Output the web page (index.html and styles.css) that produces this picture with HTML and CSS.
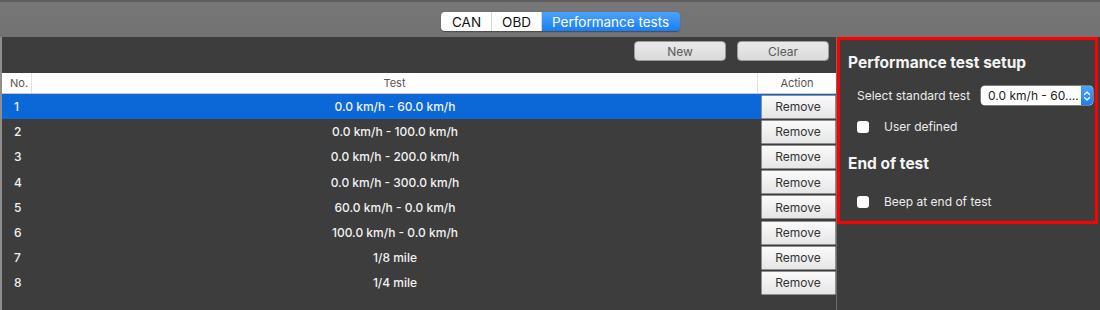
FILE: index.html
```html
<!DOCTYPE html>
<html lang="en">
<head>
    <meta charset="UTF-8">
    <title>Performance tests</title>
    <link rel="stylesheet" href="styles.css">
</head>
<body>
    <div class="topbar">
        <div class="segmented">
            <span class="seg">CAN</span>
            <span class="seg">OBD</span>
            <span class="seg active">Performance tests</span>
        </div>
    </div>
    <div class="main">
        <div class="list-panel">
            <div class="toolbar">
                <button class="btn wide">New</button>
                <button class="btn wide">Clear</button>
            </div>
            <div class="table">
                <div class="thead">
                    <div class="col-no">No.</div>
                    <div class="col-test">Test</div>
                    <div class="col-action">Action</div>
                </div>
                <div class="row selected">
                    <div class="col-no">1</div>
                    <div class="col-test">0.0 km/h - 60.0 km/h</div>
                    <div class="col-action"><button class="btn remove">Remove</button></div>
                </div>
                <div class="row">
                    <div class="col-no">2</div>
                    <div class="col-test">0.0 km/h - 100.0 km/h</div>
                    <div class="col-action"><button class="btn remove">Remove</button></div>
                </div>
                <div class="row">
                    <div class="col-no">3</div>
                    <div class="col-test">0.0 km/h - 200.0 km/h</div>
                    <div class="col-action"><button class="btn remove">Remove</button></div>
                </div>
                <div class="row">
                    <div class="col-no">4</div>
                    <div class="col-test">0.0 km/h - 300.0 km/h</div>
                    <div class="col-action"><button class="btn remove">Remove</button></div>
                </div>
                <div class="row">
                    <div class="col-no">5</div>
                    <div class="col-test">60.0 km/h - 0.0 km/h</div>
                    <div class="col-action"><button class="btn remove">Remove</button></div>
                </div>
                <div class="row">
                    <div class="col-no">6</div>
                    <div class="col-test">100.0 km/h - 0.0 km/h</div>
                    <div class="col-action"><button class="btn remove">Remove</button></div>
                </div>
                <div class="row">
                    <div class="col-no">7</div>
                    <div class="col-test">1/8 mile</div>
                    <div class="col-action"><button class="btn remove">Remove</button></div>
                </div>
                <div class="row">
                    <div class="col-no">8</div>
                    <div class="col-test">1/4 mile</div>
                    <div class="col-action"><button class="btn remove">Remove</button></div>
                </div>
            </div>
        </div>
        <div class="side-panel">
            <div class="setup-box">
                <h2>Performance test setup</h2>
                <div class="field">
                    <span class="field-label">Select standard test</span>
                    <div class="select">
                        <span class="select-value">0.0 km/h - 60....</span>
                        <span class="stepper">
                            <svg width="8" height="12" viewBox="0 0 8 12">
                                <path d="M1.5 4.5 L4 2 L6.5 4.5 M1.5 7.5 L4 10 L6.5 7.5" fill="none" stroke="#fff" stroke-width="1.3" stroke-linecap="round" stroke-linejoin="round"/>
                            </svg>
                        </span>
                    </div>
                </div>
                <label class="check"><span class="box"></span>User defined</label>
                <h2 class="second">End of test</h2>
                <label class="check beep"><span class="box"></span>Beep at end of test</label>
            </div>
        </div>
    </div>
</body>
</html>
```

FILE: styles.css
```css
body {
    margin: 0;
    width: 1100px;
    height: 310px;
    overflow: hidden;
    background-color: #3d3d3d;
    font-family: Inter, "Noto Sans", sans-serif;
    font-size: 12px;
    color: #ececec;
}
.topbar {
    height: 37px;
    box-sizing: border-box;
    border-top: 2px solid #5e5e5e;
    background: linear-gradient(#777777, #727272);
    display: flex;
    align-items: flex-start;
    padding-left: 441px;
    padding-top: 10px;
}
.segmented {
    display: flex;
    height: 19px;
    border-radius: 4px;
    overflow: hidden;
    box-shadow: 0 0.5px 1px rgba(0, 0, 0, 0.35);
}
.seg {
    display: flex;
    align-items: center;
    padding: 0 10px;
    background: #ffffff;
    color: #111;
    font-size: 13.5px;
    border-right: 1px solid #d6d6d6;
}
.seg:first-child {
    padding: 0 10px 0 11px;
}
.seg.active {
    background: linear-gradient(#4aa3fb, #1a7ff5);
    color: #fff;
    border-right: 0;
    padding: 0 11px 0 10px;
}
.main {
    display: flex;
    height: 273px;
}
.list-panel {
    flex-shrink: 0;
    width: 834px;
    border-left: 2px solid #8e8e8e;
    border-right: 1px solid #6c6c6c;
    display: flex;
    flex-direction: column;
}
.toolbar {
    height: 36px;
    box-sizing: border-box;
    display: flex;
    justify-content: flex-end;
    gap: 11px;
    padding: 4px 7px 0 0;
}
.btn {
    font-family: inherit;
    font-size: 12px;
    color: #333;
    background: linear-gradient(#f7f7f7, #e4e4e4);
    border: 1px solid #b5b5b5;
    border-radius: 4px;
    padding: 0;
    margin: 0;
}
.btn.wide {
    width: 92px;
    height: 20px;
    color: #5a5a5a;
    background: linear-gradient(#e9e9e9, #dadada);
    border-color: #9c9c9c;
}
.thead {
    display: flex;
    height: 21px;
    background: #ffffff;
    color: #555;
    font-size: 11px;
    border-bottom: 1px solid #c8c8c8;
    box-sizing: border-box;
}
.thead > div {
    display: flex;
    align-items: center;
}
.thead .col-no,
.thead .col-test {
    border-right: 1px solid #e2e2e2;
}
.col-no {
    width: 30px;
    padding-left: 8px;
    box-sizing: border-box;
}
.col-test {
    flex: 1;
    justify-content: center;
    text-align: center;
}
.col-action {
    width: 78px;
    justify-content: center;
}
.row {
    display: flex;
    height: 25.2px;
    align-items: center;
    font-weight: 500;
    color: #f2f2f2;
}
.row .col-no {
    padding-left: 12px;
}
.row .col-action {
    display: flex;
    padding-left: 2px;
    box-sizing: border-box;
}
.row.selected {
    background: #0b68d6;
}
.btn.remove {
    width: 75px;
    height: 24px;
    border-radius: 1px;
    border-color: #8f8f8f;
    background: linear-gradient(#fafafa, #e6e6e6);
    font-size: 12px;
}
.side-panel {
    flex: 1;
}
.setup-box {
    width: 247px;
    height: 181px;
    border: 3px solid #ff0000;
    padding: 0 0 0 8px;
}
h2 {
    margin: 13px 0 0 0;
    font-size: 15.5px;
    font-weight: 700;
    color: #f4f4f4;
    line-height: 19px;
}
h2.second {
    margin-top: 20px;
}
.field {
    display: flex;
    align-items: center;
    margin-top: 14px;
    padding-left: 9px;
    gap: 11px;
}
.field-label {
    white-space: nowrap;
    font-size: 12px;
}
.select {
    flex-shrink: 0;
    width: 112px;
    height: 19px;
    background: #fff;
    border-radius: 4px;
    display: flex;
    align-items: center;
    overflow: hidden;
    color: #222;
    box-shadow: 0 0 0 0.5px #bbb;
}
.select-value {
    flex: 1;
    padding-left: 7px;
    font-size: 12px;
    white-space: nowrap;
}
.stepper {
    width: 12px;
    height: 19px;
    background: linear-gradient(#4aa3fb, #1a7ff5);
    display: flex;
    align-items: center;
    justify-content: center;
}
.check {
    display: flex;
    align-items: center;
    gap: 15px;
    padding-left: 9px;
    margin-top: 14px;
}
.check.beep {
    margin-top: 21px;
}
.box {
    width: 12px;
    height: 12px;
    background: #fff;
    border-radius: 3px;
    display: inline-block;
}
```
